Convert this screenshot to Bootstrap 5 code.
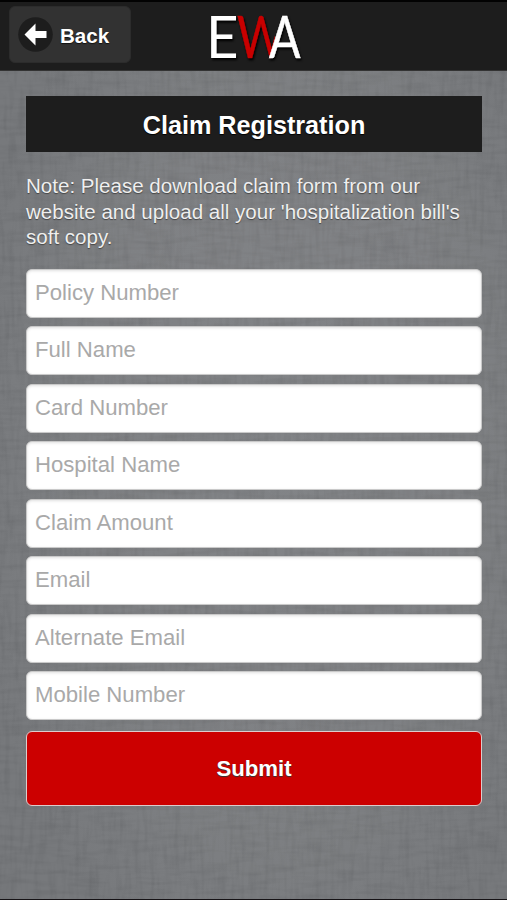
<!DOCTYPE html>
<html lang="en">
<head>
<meta charset="utf-8">
<meta name="viewport" content="width=device-width, initial-scale=1">
<title>Claim Registration</title>
<link href="https://cdn.jsdelivr.net/npm/bootstrap@5.3.0/dist/css/bootstrap.min.css" rel="stylesheet">
<style>
body{font-family:"Liberation Sans",Arial,sans-serif;background:#7b7d80;height:900px;overflow:hidden}
.screen{height:900px;border-bottom:1px solid #161316;isolation:isolate}
.linen{inset:0;z-index:-1}
.topbar{height:71px;background:#1d1d1d;border-top:2px solid #020202;border-bottom:1px solid #333;padding:4px 9px 0}
.btn-back{width:122px;height:57px;background:#323232;border:1px solid #2c2c2c;border-radius:6px;color:#fff;font-size:20.6px;line-height:1;padding:0 0 0 8px;gap:7px;text-shadow:0 1px 1px #111}
.btn-back span{padding-top:3px}
.logo{left:204px;top:0;overflow:visible;filter:drop-shadow(1px 2px 1px #000)}
.page{padding:25px 25px 0 26px}
.page-title{height:56px;padding-top:2px;background:#1d1d1d;color:#fff;font-size:25.2px;text-shadow:0 1px 1px #000}
.note{margin:21px 0 19px;font-size:20.56px;line-height:25.5px;color:#efefef;text-shadow:0 1px 1px #444}
.fields{gap:8.5px}
.field.form-control{height:49px;border:1px solid #c9c9c9;border-radius:6px;padding:0 9px 1px 8px;font-size:22.15px;line-height:1.2;background:#fff;box-shadow:inset 0 1px 3px rgba(0,0,0,.12)}
.field::placeholder{color:#a9a9a9;opacity:1}
.btn-send{height:75px;margin-top:10.5px;padding-top:7px;background:#c00;border:1px solid #dcc;border-radius:6px;color:#fff;font-size:22.2px;text-shadow:0 1px 1px #333}
</style>
<script src="https://cdn.jsdelivr.net/npm/bootstrap@5.3.0/dist/js/bootstrap.bundle.min.js"></script>
</head>
<body>
<div class="screen position-relative">
  <svg class="linen position-absolute" width="507" height="899" aria-hidden="true">
    <defs>
      <filter id="warp" x="0" y="0" width="100%" height="100%">
        <feTurbulence type="fractalNoise" baseFrequency="0.2 0.03" numOctaves="2" seed="4"/>
        <feColorMatrix values="0 0 0 0 0  0 0 0 0 0  0 0 0 0 0  0.9 0 0 0 -0.38"/>
      </filter>
      <filter id="weft" x="0" y="0" width="100%" height="100%">
        <feTurbulence type="fractalNoise" baseFrequency="0.03 0.2" numOctaves="2" seed="9"/>
        <feColorMatrix values="0 0 0 0 0  0 0 0 0 0  0 0 0 0 0  0.9 0 0 0 -0.38"/>
      </filter>
      <radialGradient id="glow" cx=".55" cy=".5" r=".62">
        <stop offset="0" stop-color="#828487"/><stop offset=".6" stop-color="#7f8184"/><stop offset="1" stop-color="#77797c"/>
      </radialGradient>
    </defs>
    <rect width="507" height="900" fill="url(#glow)"/>
    <rect width="507" height="900" filter="url(#warp)" opacity=".13"/>
    <rect width="507" height="900" filter="url(#weft)" opacity=".13"/>
  </svg>

  <header class="topbar position-relative">
    <a href="#" class="btn btn-back fw-bold d-flex align-items-center">
      <svg width="35" height="35" viewBox="0 0 35 35" aria-hidden="true">
        <circle cx="17.5" cy="17.5" r="17.3" fill="#1d1d1d"/>
        <path d="M6.500 17.5 17.5 6.5V14H28.500V21H17.500V28.500Z" fill="#fff"/>
      </svg>
      <span>Back</span>
    </a>
    <svg class="logo position-absolute" width="100" height="68" role="img" aria-label="EWA" font-family="Lato, sans-serif" font-size="59">
      <!-- the W ends where the left leg of the A begins -->
      <clipPath id="wEdge"><path d="M30 5H61L71 36 66 60H30Z"/></clipPath>
      <text x="2" y="56" fill="#fff" font-weight="400" textLength="32.5" lengthAdjust="spacingAndGlyphs">E</text>
      <g clip-path="url(#wEdge)">
        <text x="33" y="56" fill="#c80000" stroke="#c80000" stroke-width=".6" font-weight="400" textLength="48" lengthAdjust="spacingAndGlyphs">W</text>
      </g>
      <text x="65" y="56" fill="#fff" stroke="#fff" stroke-width=".6" font-weight="400" textLength="31.5" lengthAdjust="spacingAndGlyphs">A</text>
    </svg>
  </header>

  <main class="page">
    <h1 class="page-title fw-bold mb-0 d-flex align-items-center justify-content-center">Claim Registration</h1>
    <p class="note">Note: Please download claim form from our website and upload all your 'hospitalization bill's soft copy.</p>
    <form>
      <div class="fields d-flex flex-column">
        <input class="form-control field" placeholder="Policy Number">
        <input class="form-control field" placeholder="Full Name">
        <input class="form-control field" placeholder="Card Number">
        <input class="form-control field" placeholder="Hospital Name">
        <input class="form-control field" placeholder="Claim Amount">
        <input class="form-control field" placeholder="Email">
        <input class="form-control field" placeholder="Alternate Email">
        <input class="form-control field" placeholder="Mobile Number">
      </div>
      <button type="button" class="btn btn-send w-100 fw-bold">Submit</button>
    </form>
  </main>
</div>
</body>
</html>
